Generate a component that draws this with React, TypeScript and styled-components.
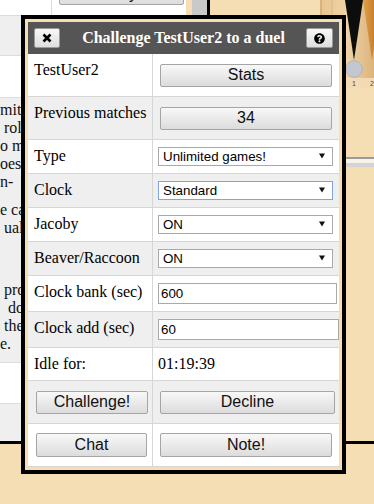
import React from "react"
import styled, { createGlobalStyle } from "styled-components"
import { FaQuestionCircle } from "react-icons/fa"

const serif = `"Liberation Serif", "Times New Roman", serif`
const sans = `"Liberation Sans", Arial, sans-serif`

const GlobalStyle = createGlobalStyle`
  html, body {
    margin: 0;
    padding: 0;
  }
  body {
    background: #f5deb3;
    font-family: ${serif};
  }
`

const Page = styled.div`
  position: relative;
  width: 374px;
  height: 504px;
  overflow: hidden;
  background: #f5deb3;
`

const Backdrop = styled.div`
  display: grid;
  grid-template-columns: 186px 6px 15px 3px 1fr;
  height: 441px;
  border-bottom: 3px solid #000;
`

const Lobby = styled.div`
  display: flex;
  flex-direction: column;
  background: #fff;
  font-family: ${serif};
  font-size: 16px;
  color: #111;
  overflow: hidden;
`

const LobbyRow = styled.div<{ $h?: number; $shade?: boolean }>`
  display: flex;
  flex: ${(p) => (p.$h ? "none" : "1")};
  height: ${(p) => (p.$h ? `${p.$h}px` : "auto")};
  box-sizing: border-box;
  background: ${(p) => (p.$shade ? "#efefef" : "#fff")};
  border-bottom: ${(p) => (p.$h ? "1px solid #dcdcdc" : "none")};
`

const LobbyCell = styled.div<{ $w?: number }>`
  width: ${(p) => (p.$w ? `${p.$w}px` : "auto")};
  flex: ${(p) => (p.$w ? "none" : "1")};
  display: flex;
  align-items: flex-end;
  border-right: ${(p) => (p.$w ? "1px solid #dcdcdc" : "none")};
`

const LobbyButton = styled.button`
  width: 125px;
  height: 23px;
  margin: 0 0 10px 7px;
  padding: 0;
  border: 1px solid #a5a5a5;
  border-radius: 2px;
  background: linear-gradient(#f7f7f7, #dcdcdc);
  font-family: ${sans};
  font-size: 16px;
  color: #111;
`

const Blurb = styled.div`
  padding-top: 3px;
  line-height: 18px;
  white-space: pre;
`

const BlurbPara = styled.p<{ $gap: number }>`
  margin: ${(p) => p.$gap}px 0 0;
`

const Track = styled.div`
  background: #c9c9c9;
`

const Rail = styled.div`
  background: #000;
`

const Board = styled.div`
  display: flex;
  flex-direction: column;
`

const Dialog = styled.div`
  position: absolute;
  left: 21px;
  top: 15px;
  width: 311px;
  border: 4px solid #000;
  padding: 3px;
  background: #f5deb3;
`

const TitleBar = styled.div`
  display: grid;
  grid-template-columns: 27px 1fr 27px;
  align-items: center;
  height: 32px;
  padding: 0 6px;
  background: #555;
`

const Title = styled.div`
  text-align: center;
  color: #fff;
  font-family: ${serif};
  font-weight: bold;
  font-size: 16px;
`

const IconButton = styled.button<{ $w: number }>`
  display: flex;
  align-items: center;
  justify-content: center;
  width: ${(p) => p.$w}px;
  height: 20px;
  padding: 0;
  border: 1px solid #9a9a9a;
  border-radius: 2px;
  background: linear-gradient(#f7f7f7, #dedede);
  color: #000;
`

const Table = styled.div`
  display: flex;
  flex-direction: column;
  background: #fff;
`

const Row = styled.div<{ $h: number; $shade?: boolean }>`
  display: grid;
  grid-template-columns: 125px 1fr;
  height: ${(p) => p.$h}px;
  box-sizing: border-box;
  background: ${(p) => (p.$shade ? "#efefef" : "#fff")};
  border-bottom: 1px solid #d6d6d6;
`

const Cell = styled.div<{ $top?: boolean; $first?: boolean }>`
  display: flex;
  align-items: ${(p) => (p.$top ? "flex-start" : "center")};
  padding: ${(p) => (p.$top ? "7px" : "0")} 0 0 ${(p) => (p.$first ? "6px" : "5px")};
  border-right: ${(p) => (p.$first ? "1px solid #d6d6d6" : "none")};
  font-family: ${serif};
  font-size: 16px;
  line-height: 18px;
  color: #000;
`

const Button = styled.button<{ $w: number; $h?: number }>`
  width: ${(p) => p.$w}px;
  height: ${(p) => p.$h ?? 23}px;
  margin-left: 2px;
  padding: 0;
  border: 1px solid #a5a5a5;
  border-radius: 2px;
  background: linear-gradient(#f8f8f8, #dcdcdc);
  font-family: ${sans};
  font-size: 16px;
  color: #111;
`

const SelectBox = styled.div<{ $focus?: boolean }>`
  position: relative;
  width: 175px;
  height: 19px;
  box-sizing: border-box;
  border: 1px solid ${(p) => (p.$focus ? "#7ea6e2" : "#a9a9a9")};
  background: #fff;
`

const NativeSelect = styled.select`
  appearance: none;
  display: block;
  width: 100%;
  height: 100%;
  margin: 0;
  padding: 0 0 0 4px;
  border: 0;
  outline: 0;
  background: transparent;
  font-family: ${sans};
  font-size: 13.333px;
  color: #000;
`

const Caret = styled.svg`
  position: absolute;
  right: 7px;
  top: 5px;
  pointer-events: none;
`

const TextInput = styled.input<{ $w: number }>`
  width: ${(p) => p.$w}px;
  height: 21px;
  box-sizing: border-box;
  margin: 0;
  padding: 0 2px;
  border: 1px solid #a9a9a9;
  background: #fff;
  font-family: ${sans};
  font-size: 13.333px;
  color: #000;
`

const Select = ({ value, options, focus }: { value: string; options: string[]; focus?: boolean }) => (
  <SelectBox $focus={focus}>
    <NativeSelect defaultValue={value}>
      {options.map((o) => (
        <option key={o}>{o}</option>
      ))}
    </NativeSelect>
    <Caret width="6" height="6" viewBox="0 0 6 6">
      <path d="M0 0.5 H6 L3 5.5 Z" fill="#111" />
    </Caret>
  </SelectBox>
)

const CloseGlyph = () => (
  <svg width="10" height="10" viewBox="0 0 10 10">
    <path d="M1.5 1.5 L8.5 8.5 M8.5 1.5 L1.5 8.5" stroke="#000" strokeWidth="2.6" />
  </svg>
)

const BoardCorner = () => (
  <svg width="164" height="170" viewBox="0 0 164 170">
    <defs>
      <linearGradient id="wood" x1="0" x2="1" y1="0" y2="0">
        <stop offset="0" stopColor="#e7c592" />
        <stop offset="0.5" stopColor="#efd3a6" />
        <stop offset="1" stopColor="#dcb37c" />
      </linearGradient>
      <linearGradient id="brown" x1="0" x2="1" y1="0" y2="0">
        <stop offset="0" stopColor="#e2a04a" />
        <stop offset="1" stopColor="#b86d1e" />
      </linearGradient>
    </defs>
    <rect x="110" y="0" width="54" height="78" fill="url(#wood)" />
    <line x1="111" y1="0" x2="111" y2="78" stroke="#c9a06a" strokeWidth="1" />
    <line x1="122" y1="0" x2="122" y2="78" stroke="#d9b582" strokeWidth="1" />
    <polygon points="135,0 153,0 144,60" fill="#0d0d0d" />
    <polygon points="153,0 171,0 162,60" fill="url(#brown)" />
    <circle cx="144" cy="69" r="8.3" fill="#c3c7cf" stroke="#a9adb6" strokeWidth="0.8" />
    <rect x="110" y="78" width="54" height="10" fill="#f1dab4" />
    <text x="144" y="86" fontSize="7" fontFamily={sans} textAnchor="middle" fill="#5a4630">1</text>
    <text x="162" y="86" fontSize="7" fontFamily={sans} textAnchor="middle" fill="#5a4630">2</text>
    <rect x="136" y="157" width="28" height="2" fill="#9b9b9b" />
    <rect x="136" y="159" width="28" height="4" fill="#f7f2ea" />
    <rect x="136" y="163" width="28" height="4" fill="#d4d4d4" />
  </svg>
)

export default function App() {
  return (
    <Page>
      <GlobalStyle />
      <Backdrop>
        <Lobby>
          <LobbyRow $h={16}>
            <LobbyCell $w={51} />
            <LobbyCell>
              <LobbyButton>Play</LobbyButton>
            </LobbyCell>
          </LobbyRow>
          <LobbyRow $h={40} $shade />
          <LobbyRow $h={42} />
          <LobbyRow $h={265} $shade>
            <Blurb>
              <BlurbPara $gap={0}>{"mite\n roll\no m\noes\nn-"}</BlurbPara>
              <BlurbPara $gap={10}>{"e ca\n ual"}</BlurbPara>
              <BlurbPara $gap={44}>{" pro\n  doe\n the\ne."}</BlurbPara>
            </Blurb>
          </LobbyRow>
          <LobbyRow $h={41} />
          <LobbyRow $shade />
        </Lobby>
        <div />
        <Track />
        <Rail />
        <Board>
          <BoardCorner />
        </Board>
      </Backdrop>

      <Dialog>
        <TitleBar>
          <IconButton $w={26} aria-label="Close">
            <CloseGlyph />
          </IconButton>
          <Title>Challenge TestUser2 to a duel</Title>
          <IconButton $w={27} aria-label="Help">
            <FaQuestionCircle size={11} />
          </IconButton>
        </TitleBar>
        <Table>
          <Row $h={43}>
            <Cell $first $top>TestUser2</Cell>
            <Cell>
              <Button $w={172}>Stats</Button>
            </Cell>
          </Row>
          <Row $h={43} $shade>
            <Cell $first $top>Previous matches</Cell>
            <Cell>
              <Button $w={172}>34</Button>
            </Cell>
          </Row>
          <Row $h={34}>
            <Cell $first $top>Type</Cell>
            <Cell>
              <Select value="Unlimited games!" options={["Unlimited games!", "Match to 3", "Match to 5", "Match to 7"]} />
            </Cell>
          </Row>
          <Row $h={34} $shade>
            <Cell $first $top>Clock</Cell>
            <Cell>
              <Select focus value="Standard" options={["Standard", "Blitz", "None"]} />
            </Cell>
          </Row>
          <Row $h={34}>
            <Cell $first $top>Jacoby</Cell>
            <Cell>
              <Select value="ON" options={["ON", "OFF"]} />
            </Cell>
          </Row>
          <Row $h={34} $shade>
            <Cell $first $top>Beaver/Raccoon</Cell>
            <Cell>
              <Select value="ON" options={["ON", "OFF"]} />
            </Cell>
          </Row>
          <Row $h={36}>
            <Cell $first $top>Clock bank (sec)</Cell>
            <Cell>
              <TextInput $w={179} defaultValue="600" />
            </Cell>
          </Row>
          <Row $h={36} $shade>
            <Cell $first $top>Clock add (sec)</Cell>
            <Cell>
              <TextInput $w={181} defaultValue="60" />
            </Cell>
          </Row>
          <Row $h={33}>
            <Cell $first $top>Idle for:</Cell>
            <Cell $top>01:19:39</Cell>
          </Row>
          <Row $h={43} $shade>
            <Cell $first>
              <Button $w={112}>Challenge!</Button>
            </Cell>
            <Cell>
              <Button $w={175}>Decline</Button>
            </Cell>
          </Row>
          <Row $h={43}>
            <Cell $first>
              <Button $w={111} $h={24}>Chat</Button>
            </Cell>
            <Cell>
              <Button $w={172} $h={24}>Note!</Button>
            </Cell>
          </Row>
        </Table>
      </Dialog>
    </Page>
  )
}
